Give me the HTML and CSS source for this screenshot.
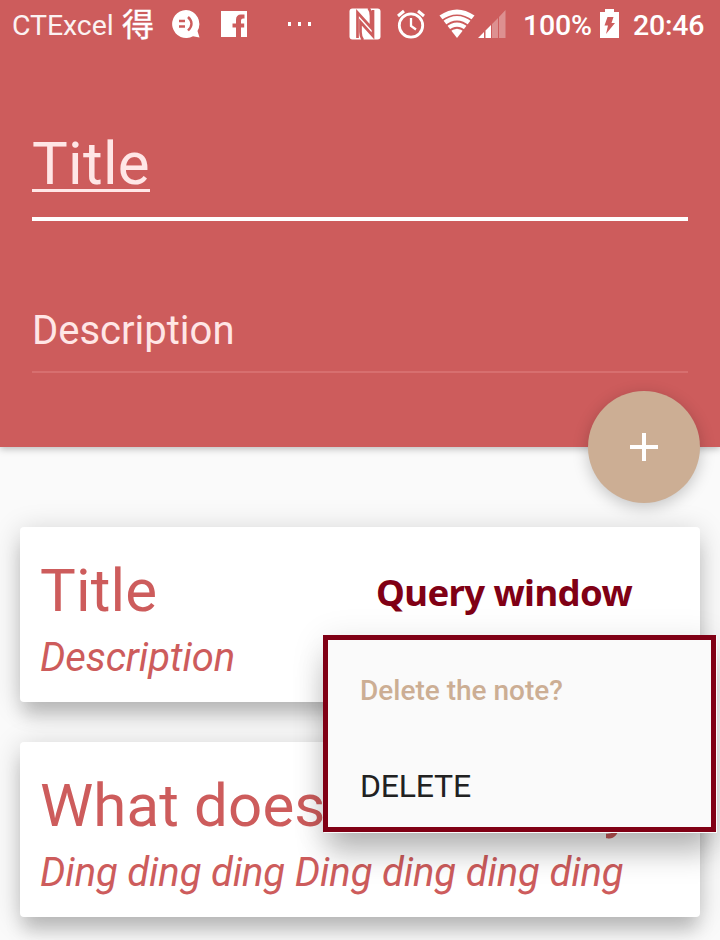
FILE: index.html
```html
<!DOCTYPE html>
<html lang="en">
<head>
<meta charset="utf-8">
<title>Notes</title>
<link rel="stylesheet" href="styles.css">
</head>
<body>
<div class="screen">
  <header class="header">
    <div class="status">
      <span class="carrier">CTExcel</span>
      <span class="ime" lang="zh">得</span>
      <svg class="chat" width="30" height="30" viewBox="0 0 30 30"><path fill="#fff" d="M15 1a14 14 0 1 0 7 26.200L28.500 28.500 26.500 22A14 14 0 0 0 15 1z"/><path d="M8 12h6M8 17.500h6" stroke="#cd5c5c" stroke-width="2.300" fill="none"/><path d="M17 8q7 6.500 0 13.500" stroke="#cd5c5c" stroke-width="2.400" fill="none"/></svg>
      <svg class="fb" width="26" height="26" viewBox="0 0 26 26"><path fill="#fff" d="M0 0h26v26h-6v-9.500h3.200v-4H20V9.500q0-2 2-2h1.500V3.500h-3.500q-5 0-5 5.500v3.500h-3.500v4H15V26H0z"/></svg>
      <svg class="dots" width="24" height="4" viewBox="0 0 24 4"><path fill="#fff" d="M0 0h3v4H0zM10 0h3v4h-3zM20 0h3v4h-3z"/></svg>
      <svg class="nfc" width="32" height="32" viewBox="0 0 32 32"><rect x=".5" y=".5" width="31" height="31" rx="3" fill="#fff"/><path d="M8.500 30V4.500L22 19.500V8q0-5-2.500-8M24 2v26L11.500 14v10q0 5 2.500 8" fill="none" stroke="#cd5c5c" stroke-width="2.700"/></svg>
      <svg class="alarm" width="30" height="30" viewBox="0 0 30 30" fill="none" stroke="#fff"><circle cx="15" cy="16.500" r="11.700" stroke-width="2.800"/><path d="M15 9v8l5 3.500" stroke-width="2.300"/><path d="m2 7 6-5M28 7l-6-5" stroke-width="3"/></svg>
      <svg class="wifi" width="36" height="30" viewBox="0 0 36 30"><path fill="#fff" d="M18 29 .5 6.500Q18-5.500 35.500 6.500z"/><g fill="none" stroke="#cd5c5c" stroke-width="1.700"><path d="M2.500 12Q18 .5 33.500 12M6 17.500Q18 7.500 30 17.500M9.500 22.500Q18 15 26.500 22.500"/></g></svg>
      <svg class="signal" width="28" height="28" viewBox="0 0 28 28"><path fill="#fff" d="M0 28 6 22v6zM7.500 28v-7.500l5.500-5.500v13z"/><path fill="#fff" opacity=".32" d="M14 28V14l6-6v20zM21 28V7l6.500-7v28z"/></svg>
      <span class="percent">100%</span>
      <svg class="battery" width="19" height="29" viewBox="0 0 19 29"><path fill="#fff" d="M0 3h5V0h9v3h5v26H0z"/><path fill="#cd5c5c" d="M7.500 8h6l-2 6h3.500L6 25l2-8.500H4.500z"/></svg>
      <span class="clock">20:46</span>
    </div>
    <div class="field field-title"><span>Title</span></div>
    <div class="field field-desc"><span>Description</span></div>
    <button class="fab" aria-label="Add"></button>
  </header>
  <main class="notes">
    <article class="note">
      <h2>Title</h2>
      <p>Description</p>
      <strong class="caption">Query window</strong>
    </article>
    <article class="note">
      <h2>What does the fox say</h2>
      <p>Ding ding ding Ding ding ding ding</p>
    </article>
  </main>
  <div class="popup">
    <div class="popup-title">Delete the note?</div>
    <div class="popup-action">DELETE</div>
  </div>
</div>
</body>
</html>
```
FILE: styles.css
```css
* { box-sizing: border-box; }
body { margin: 0; font-family: Roboto, "Liberation Sans", sans-serif; }
.screen { position: relative; width: 720px; height: 940px; overflow: hidden; background: #fafafa; }
.header { position: relative; height: 447px; background: #cd5c5c; box-shadow: 0 2px 7px rgba(0,0,0,.26); }
.status { display: flex; align-items: flex-start; height: 48px; color: #fff; font-size: 28.5px; line-height: 34px; white-space: nowrap; }
.status svg { flex: none; display: block; }
.carrier { width: 110px; margin: 9px 0 0 12px; letter-spacing: -.1px; opacity: .92; }
.ime { width: 32px; font: 400 32px/32px "Noto Sans CJK TC", sans-serif; margin-top: 6px; -webkit-text-stroke: .4px #fff; }
.chat { margin: 9px 0 0 17px; }
.fb { margin: 11px 0 0 20px; }
.dots { margin: 22px 0 0 41px; }
.nfc { margin: 8px 0 0 37px; }
.alarm { margin: 9px 0 0 15px; }
.wifi { margin: 9px 0 0 13px; }
.signal { margin: 10px 0 0 3px; }
.percent { width: 68px; margin: 9px 0 0 17px; font-weight: 500; letter-spacing: -.2px; }
.battery { margin: 9px 0 0 9px; }
.clock { margin: 9px 0 0 14px; font-weight: 500; letter-spacing: -.2px; }
.field { margin: 0 32px; color: #ffe6e6; }
.field-title { height: 173px; padding-top: 81px; border-bottom: 4px solid #fff; font-size: 60px; line-height: 70px; }
.field-title span { display: inline-block; height: 63px; border-bottom: 3px solid #ffe6e6; letter-spacing: .3px; }
.field-desc { height: 152px; padding-top: 86px; border-bottom: 2px solid #d76f6f; font-size: 40px; line-height: 47px; }
.fab { position: absolute; right: 20px; bottom: -56px; width: 112px; height: 112px; border: 0; border-radius: 50%; background: linear-gradient(#fff,#fff) center/28px 4px no-repeat, linear-gradient(#fff,#fff) center/4px 28px no-repeat, #ccae94; box-shadow: 0 4px 16px rgba(0,0,0,.22); }
.notes { display: flex; flex-direction: column; gap: 40px; padding: 80px 20px 0; }
.note { position: relative; height: 175px; padding: 29px 20px 0; border-radius: 4px; background: #fff; color: #cd5c5c; box-shadow: 0 17px 18px -3px rgba(0,0,0,.17), 0 4px 28px rgba(0,0,0,.18); white-space: nowrap; }
.note h2 { margin: 0; font-size: 60px; line-height: 70px; font-weight: 400; letter-spacing: .13px; }
.note p { margin: 8px 0 0; font-size: 40px; line-height: 47px; font-style: italic; letter-spacing: -.13px; }
.caption { position: absolute; left: 356px; top: 39px; color: #800015; font: 700 36.5px/52px "Noto Sans", sans-serif; letter-spacing: -.6px; }
.popup { position: absolute; left: 323px; top: 635px; width: 393px; height: 197px; padding: 34px 32px 0; border: 5px solid #800015; background: #fafafa; box-shadow: 1px 1px 0 0 #fafafa, 0 24px 28px -4px rgba(0,0,0,.25), 0 4px 32px rgba(0,0,0,.1); }
.popup-title { font-size: 28px; line-height: 33px; font-weight: 500; color: #ccae94; }
.popup-action { margin-top: 60px; font-size: 32px; line-height: 38px; letter-spacing: -.2px; color: #212121; }
```
